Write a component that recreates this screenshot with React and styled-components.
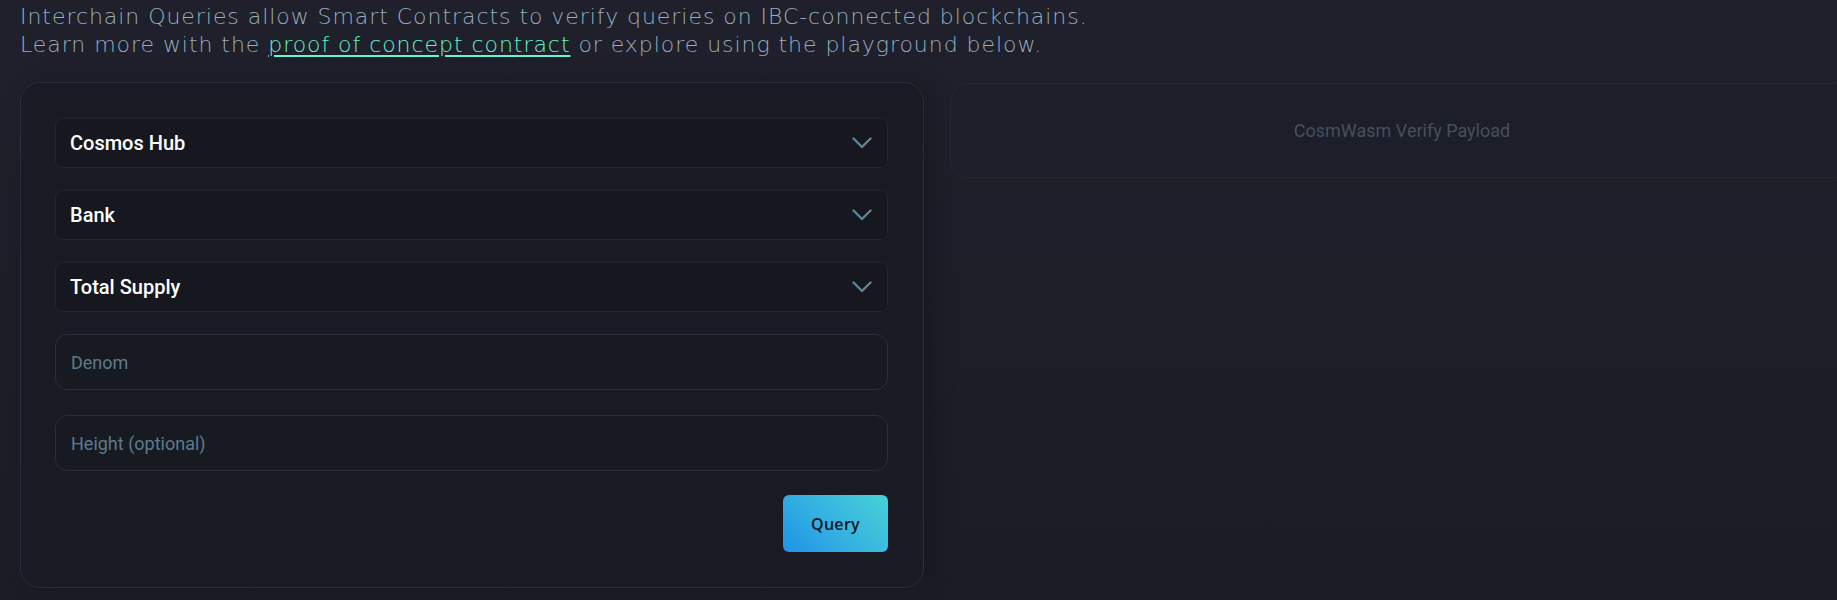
import React from "react";
import styled, { createGlobalStyle } from "styled-components";

const GlobalStyle = createGlobalStyle`
  html, body {
    margin: 0;
    padding: 0;
    background: #1d1f29;
    overflow: hidden;
  }
`;

const fields = [
  { id: "chain", type: "select", value: "Cosmos Hub" },
  { id: "module", type: "select", value: "Bank" },
  { id: "query", type: "select", value: "Total Supply" },
  { id: "denom", type: "input", placeholder: "Denom" },
  { id: "height", type: "input", placeholder: "Height (optional)" },
];

const Chevron = () => (
  <svg width="20" height="12" viewBox="0 0 20 12" fill="none">
    <path d="M1.5 1.5 L10 10 L18.5 1.5" stroke="#5f8596" strokeWidth="2.4" strokeLinecap="round" strokeLinejoin="round" />
  </svg>
);

const App = () => {
  return (
    <Page>
      <GlobalStyle />
      <Intro>
        Interchain Queries allow Smart Contracts to verify queries on IBC-connected blockchains.
        <br />
        Learn more with the <a href="#poc">proof of concept contract</a> or explore using the playground below.
      </Intro>

      <Columns>
        <FormCard>
          <Fields>
            {fields.map((f) =>
              f.type === "select" ? (
                <Select key={f.id}>
                  <span>{f.value}</span>
                  <Chevron />
                </Select>
              ) : (
                <Input key={f.id} placeholder={f.placeholder} $spaced={f.id === "height"} />
              )
            )}
          </Fields>
          <Actions>
            <QueryButton>Query</QueryButton>
          </Actions>
        </FormCard>

        <ResultColumn>
          <PayloadCard>CosmWasm Verify Payload</PayloadCard>
        </ResultColumn>
      </Columns>
    </Page>
  );
};

const Page = styled.div`
  min-height: 600px;
  padding: 3px 0 0 20px;
  background: linear-gradient(180deg, #1f202b 0%, #1c1e28 60%, #1b1c26 100%);
  box-sizing: border-box;
`;

const Intro = styled.p`
  margin: 0 0 23px;
  font-family: "DejaVu Sans", "Open Sans", sans-serif;
  font-weight: 300;
  font-size: 22px;
  letter-spacing: 0.95px;
  line-height: 28px;
  color: #98adbd;
  white-space: nowrap;

  a {
    color: #63f6cb;
    text-decoration: underline;
    text-underline-offset: 3px;
  }
`;

const Columns = styled.div`
  display: grid;
  grid-template-columns: 904px 904px;
  gap: 26px;
  align-items: start;
`;

const FormCard = styled.section`
  box-sizing: border-box;
  background: #191a24;
  border: 1px solid #262f3b;
  border-radius: 20px;
  padding: 35px 35px 35px 34px;
  box-shadow: 8px 0 24px rgba(0, 0, 0, 0.2);
`;

const Fields = styled.div`
  display: flex;
  flex-direction: column;
  gap: 22px;
`;

const Select = styled.div`
  box-sizing: border-box;
  height: 50px;
  display: flex;
  align-items: center;
  justify-content: space-between;
  padding: 0 15px 0 14px;
  background: #17181f;
  border: 1px solid #23262f;
  border-radius: 7px;
  font-family: Roboto, "Liberation Sans", sans-serif;
  font-weight: 500;
  font-size: 20px;
  color: #ffffff;
`;

const Input = styled.input`
  box-sizing: border-box;
  height: 56px;
  margin-top: ${({ $spaced }) => ($spaced ? "3px" : "0")};
  width: 100%;
  padding: 0 16px 0 15px;
  background: #181a22;
  border: 1.5px solid #27303c;
  border-radius: 12px;
  outline: none;
  font-family: Roboto, "Liberation Sans", sans-serif;
  font-size: 18px;
  color: #dfe7ee;

  &::placeholder {
    color: #5b7a90;
  }
`;

const Actions = styled.div`
  display: flex;
  justify-content: flex-end;
  margin-top: 24px;
`;

const QueryButton = styled.button`
  width: 105px;
  height: 57px;
  border: none;
  border-radius: 6px;
  background: linear-gradient(45deg, #1f93e8 0%, #36b4e0 50%, #47d2d8 100%);
  font-family: "Open Sans", "DejaVu Sans", sans-serif;
  font-weight: 600;
  font-size: 16px;
  letter-spacing: 0.3px;
  color: #151821;
  cursor: pointer;
`;

const ResultColumn = styled.div`
  padding-top: 1px;
`;

const PayloadCard = styled.div`
  box-sizing: border-box;
  height: 95px;
  display: flex;
  align-items: center;
  justify-content: center;
  background: #1c1e29;
  border: 1px solid #252833;
  border-radius: 20px;
  font-family: Roboto, "Liberation Sans", sans-serif;
  font-size: 18px;
  color: #474f5c;
`;

export default App;
